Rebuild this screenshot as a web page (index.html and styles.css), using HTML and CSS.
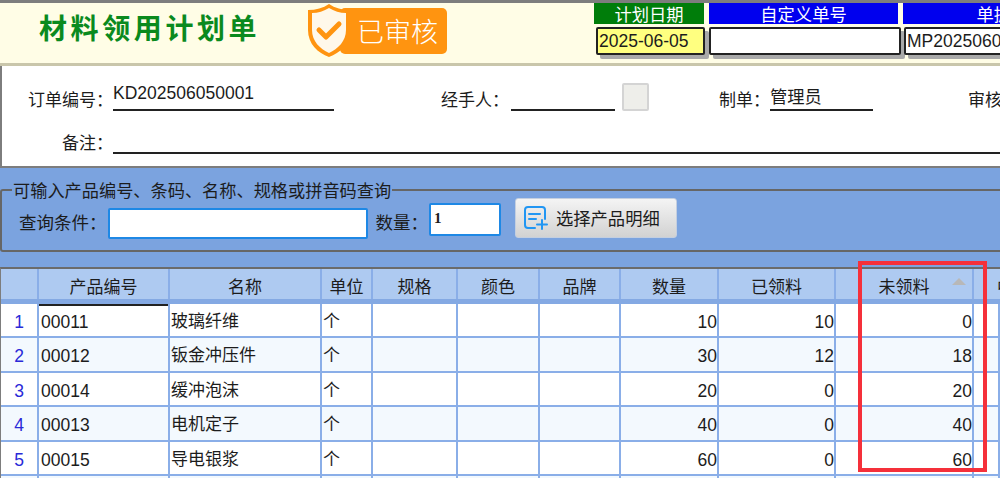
FILE: index.html
```html
<!DOCTYPE html>
<html lang="zh-CN">
<head>
<meta charset="utf-8">
<title>材料领用计划单</title>
<link rel="stylesheet" href="styles.css">
</head>
<body>
<header class="top">
  <h1 class="title">材料领用计划单</h1>
  <div class="badge">
    <svg class="shield" viewBox="0 0 44 54" width="44" height="54">
      <path d="M22 0 C28 4 35 6 43 6 L43 26 C43 40 33 49 22 53 C11 49 1 40 1 26 L1 6 C9 6 16 4 22 0Z" fill="#ff9410"/>
      <path d="M22 4 C27 7 33 9 39 9 L39 26 C39 37 31 45 22 49 C13 45 5 37 5 26 L5 9 C11 9 17 7 22 4Z" fill="#fff8ea"/>
      <path d="M12 26 L19 33 L32 20" fill="none" stroke="#ff9410" stroke-width="5" stroke-linecap="round" stroke-linejoin="round"/>
    </svg>
    <span class="badge-text">已审核</span>
  </div>
  <div class="heads">
    <div class="head head-date"><div class="head-label green">计划日期</div><div class="head-box yellow">2025-06-05</div></div>
    <div class="head head-custom"><div class="head-label">自定义单号</div><div class="head-box"></div></div>
    <div class="head head-no"><div class="head-label">单据编号</div><div class="head-box">MP20250605001</div></div>
  </div>
</header>

<section class="form">
  <div class="form-row first">
    <span class="lbl">订单编号：</span><span class="val val-order">KD202506050001</span>
    <span class="lbl gap-a">经手人：</span><span class="val val-hand"></span>
    <span class="pick"></span>
    <span class="lbl gap-b">制单：</span><span class="val val-maker">管理员</span>
    <span class="lbl gap-c">审核：</span><span class="val val-audit"></span>
  </div>
  <div class="form-row second">
    <span class="lbl note">备注：</span><span class="val val-note"></span>
  </div>
</section>

<section class="search">
  <fieldset class="box">
    <legend class="legend">可输入产品编号、条码、名称、规格或拼音码查询</legend>
    <div class="query">
      <span class="q-lbl">查询条件：</span>
      <span class="q-input"></span>
      <span class="q-lbl q-count">数量：</span>
      <span class="q-num">1</span>
      <button class="pick-btn" type="button">
        <svg viewBox="0 0 24 24" width="24" height="24" fill="none" stroke="#2196f3" stroke-width="2" stroke-linecap="round">
          <path d="M11 22 H4 Q1 22 1 19 V4 Q1 1 4 1 H18 Q21 1 21 4 V13"/>
          <path d="M5 8 H16 M5 13 H12 M13 18.500 H23 M18 14 V23"/>
        </svg>
        <span>选择产品明细</span>
      </button>
    </div>
  </fieldset>
</section>

<section class="grid">
  <div class="row hd">
    <div></div><div>产品编号</div><div>名称</div><div>单位</div><div>规格</div><div>颜色</div><div>品牌</div><div>数量</div><div>已领料</div>
    <div class="sorted">未领料<i class="tri"></i></div><div class="more">中</div>
  </div>
  <div class="row">
    <div class="idx">1</div><div class="num-l active">00011</div><div>玻璃纤维</div><div>个</div><div></div><div></div><div></div><div class="r">10</div><div class="r">10</div><div class="r">0</div><div></div>
  </div>
  <div class="row alt">
    <div class="idx">2</div><div class="num-l">00012</div><div>钣金冲压件</div><div>个</div><div></div><div></div><div></div><div class="r">30</div><div class="r">12</div><div class="r">18</div><div></div>
  </div>
  <div class="row">
    <div class="idx">3</div><div class="num-l">00014</div><div>缓冲泡沫</div><div>个</div><div></div><div></div><div></div><div class="r">20</div><div class="r">0</div><div class="r">20</div><div></div>
  </div>
  <div class="row alt">
    <div class="idx">4</div><div class="num-l">00013</div><div>电机定子</div><div>个</div><div></div><div></div><div></div><div class="r">40</div><div class="r">0</div><div class="r">40</div><div></div>
  </div>
  <div class="row">
    <div class="idx">5</div><div class="num-l">00015</div><div>导电银浆</div><div>个</div><div></div><div></div><div></div><div class="r">60</div><div class="r">0</div><div class="r">60</div><div></div>
  </div>
  <div class="row alt end">
    <div></div><div></div><div></div><div></div><div></div><div></div><div></div><div></div><div></div><div></div><div></div>
  </div>
  <div class="mark"></div>
</section>
</body>
</html>
```

FILE: styles.css
```css
* { box-sizing: border-box; }
html, body { margin: 0; height: 100%; }
body {
  width: 1000px;
  height: 478px;
  overflow: hidden;
  background: #7ba3df;
  color: #1c1c1c;
  font: 17px/1.2 "Liberation Sans", "Noto Sans CJK SC", sans-serif;
}

/* header */
.top {
  display: flex;
  width: 1000px;
  height: 66px;
  overflow: hidden;
  background: #fffde6;
  border-top: 3px solid #7d7d7d;
  border-bottom: 3px solid #c9c6ab;
}
.title {
  flex: none;
  width: 268px;
  margin: 7px 0 0 39px;
  color: #0a8a1e;
  font: 700 28px/34px "Noto Sans CJK SC", sans-serif;
  letter-spacing: 3.600px;
}
.badge { flex: none; display: flex; align-items: flex-start; width: 287px; padding-top: 1px; }
.shield { flex: none; position: relative; z-index: 1; }
.badge-text {
  width: 107px;
  height: 46px;
  margin: 4px 0 0 -11px;
  padding-left: 17px;
  background: #ff9410;
  border-radius: 5px;
  color: #fff;
  font: 300 27px/46px "Noto Sans CJK SC", sans-serif;
}
.heads { flex: none; display: flex; }
.head { flex: none; }
.head-date { width: 115px; }
.head-custom { width: 194px; }
.head-no { width: 216px; }
.head-label {
  height: 21px;
  background: #0000ee;
  color: #fff;
  text-align: center;
  font: 17.300px/21px "Noto Sans CJK SC", sans-serif;
}
.head-label.green { background: #007d0a; }
.head-date .head-label { width: 110px; }
.head-custom .head-label { width: 189px; }
.head-box {
  height: 28px;
  margin-top: 3px;
  padding-left: 1px;
  background: #fff;
  border: 2px solid #222;
  border-radius: 2px;
  box-shadow: 4px 4px 0 #a9a9a9;
  font-size: 17.500px;
  line-height: 24px;
  white-space: nowrap;
}
.head-box.yellow { background: #ffff80; }
.head-date .head-box { width: 109px; margin-left: 2px; }
.head-custom .head-box { width: 192px; }
.head-no .head-box { margin-left: 1px; }

/* form */
.form {
  width: 1000px;
  height: 102px;
  padding-top: 17px;
  background: #fff;
  border-left: 2px solid #7d7d7d;
  border-bottom: 2px solid #7d7d7d;
  overflow: hidden;
}
.form-row { display: flex; align-items: flex-end; white-space: nowrap; }
.first { height: 28px; padding-left: 26px; }
.second { height: 28px; margin-top: 15px; padding-left: 60px; }
.lbl { flex: none; height: 28px; font: 17px/32px "Noto Sans CJK SC", sans-serif; }
.val {
  flex: none;
  height: 28px;
  border-bottom: 2px solid #222;
  font-size: 17.500px;
  line-height: 20px;
}
.val-order { width: 221px; }
.gap-a { margin-left: 107px; }
.val-hand { width: 104px; margin-left: 2px; }
.pick { flex: none; width: 27px; height: 28px; margin-left: 7px; background: #eeeeea; border: 2px solid #d4d4d4; border-radius: 2px; }
.gap-b { margin-left: 70px; }
.val-maker { width: 103px; font-family: "Noto Sans CJK SC", sans-serif; font-size: 17.300px; line-height: 26px; }
.gap-c { margin-left: 95px; }
.val-audit { width: 100px; }
.val-note { flex: 1; }

/* search */
.search { width: 1000px; padding: 14px 0 15px; overflow: hidden; }
.box { margin: 0 -20px 0 0; padding: 0; min-width: 0; border: 2px solid #666; border-radius: 3px; }
.legend {
  margin-left: 10px;
  padding: 0 1px;
  height: 16px;
  font: 17.200px/16px "Noto Sans CJK SC", sans-serif;
  white-space: nowrap;
}
.query { display: flex; align-items: flex-start; height: 52px; padding-left: 17px; }
.q-lbl { flex: none; margin-top: 13px; font: 17.500px/22px "Noto Sans CJK SC", sans-serif; }
.q-input { flex: none; width: 260px; height: 31px; margin: 10px 0 0 1px; background: #fff; border: 2px solid #1e88e5; border-radius: 2px; }
.q-count { margin-left: 8px; }
.q-num {
  flex: none;
  width: 72px;
  height: 33px;
  margin: 5px 0 0 1px;
  padding-left: 3px;
  background: #fff;
  border: 2px solid #1e88e5;
  border-radius: 2px;
  font: 700 15px/27px "Liberation Serif", serif;
}
.pick-btn {
  flex: none;
  display: flex;
  align-items: center;
  gap: 8px;
  width: 162px;
  height: 40px;
  margin-left: 14px;
  padding: 0 0 0 8px;
  background: linear-gradient(#f4f4f4, #d2d2d2);
  border: 1px solid #c4cfe0;
  border-radius: 3px;
  color: #1c1c1c;
  font: 17.300px/22px "Noto Sans CJK SC", sans-serif;
}

/* grid */
.grid {
  position: relative;
  width: 1000px;
  border-top: 2px solid #6b6b6b;
  border-left: 1px solid #7d7d7d;
  background: #fff;
}
.row {
  display: grid;
  grid-template-columns: 38px 131px 152px 51px 85px 82px 81px 98px 117px 138px 26px;
  height: 34.400px;
  background: #fff;
  border-bottom: 2px solid #8aaee8;
  font: 17px/36px "Liberation Sans", "Noto Sans CJK SC", sans-serif;
  white-space: nowrap;
}
.row > div { padding-left: 1px; border-right: 2px solid #8aaee8; overflow: hidden; }
.row.alt { background: #f3f9fe; }
.row.end { height: 3px; border-bottom: 0; }
.row.hd {
  height: 35px;
  background: #aecaf1;
  border-bottom: 5px solid #84a9e3;
  line-height: 38px;
}
.hd > div { padding: 0; text-align: center; }
.hd > .sorted { position: relative; padding: 0; }
.tri {
  position: absolute;
  top: 9px;
  right: 6px;
  border: 7px solid transparent;
  border-top: 0;
  border-bottom: 7px solid #b8b8b8;
}
.hd > .more { padding-left: 23px; text-align: left; border-right: 0; }
.idx { color: #2a2ad8; text-align: center; font-size: 17.500px; }
.row > .idx { padding: 0; }
.num-l { font-size: 17.500px; }
.row > .num-l { padding-left: 2px; }
.row > .active { box-shadow: inset 0 2px 0 #222; }
.row > .r { padding: 0; text-align: right; font-size: 17.500px; }
.mark {
  position: absolute;
  top: -8px;
  left: 857px;
  width: 129px;
  height: 211px;
  border: 4px solid #f5303a;
  pointer-events: none;
}
```
